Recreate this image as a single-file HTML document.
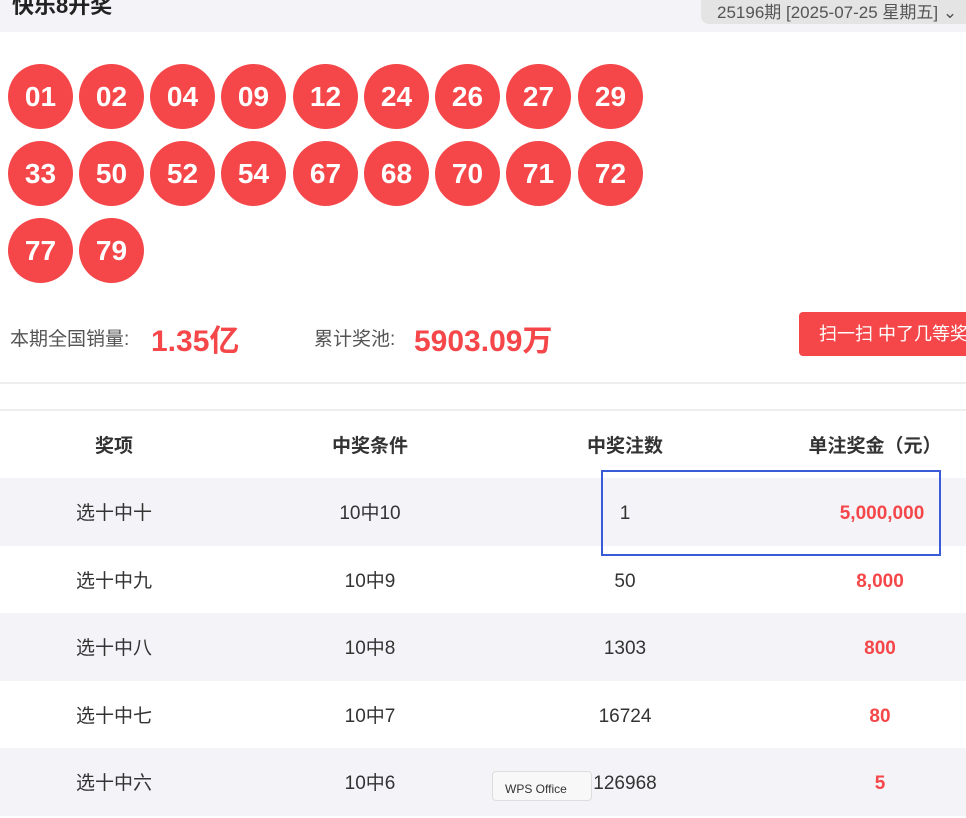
<!DOCTYPE html>
<html><head><meta charset="utf-8"><style>
*{margin:0;padding:0;box-sizing:border-box}
body{width:966px;height:788px;overflow:hidden;background:#fff;font-family:"Liberation Sans","Noto Sans CJK SC",sans-serif;position:relative;color:#333}
.hdr{position:absolute;left:0;top:0;width:966px;height:32px;background:#f4f4f8}
.title{position:absolute;left:12px;top:-12px;font-size:22px;font-weight:bold;color:#222}
.dd{position:absolute;left:701px;top:-8px;width:270px;height:32px;background:#e4e4e4;border-radius:8px;font-size:17px;color:#555;padding:6px 0 0 16px;white-space:nowrap}
.ball{position:absolute;width:65px;height:65px;border-radius:50%;background:#f5474a;color:#fff;font-weight:bold;font-size:28px;text-align:center;line-height:65px}
.lbl{position:absolute;top:324px;font-size:19px;color:#555}
.big{position:absolute;top:316px;font-size:30px;font-weight:bold;color:#f5474a}
.btn{position:absolute;left:799px;top:312px;width:180px;height:44px;background:#f5474a;border-radius:4px;color:#fff;font-size:18px;line-height:44px;padding-left:20px;white-space:nowrap}
.line{position:absolute;left:0;width:966px;height:2px;background:#eee}
.row{position:absolute;left:0;width:966px;height:68px;font-size:19px}
.row div{position:absolute;top:2px;line-height:68px;text-align:center}
.g{background:#f4f4f8}
.c1{left:14px;width:200px}.c2{left:270px;width:200px}.c3{left:525px;width:200px}.c4{left:780px;width:200px;color:#f5474a;font-weight:bold}
.h{font-weight:bold}
</style></head><body>
<div class="hdr"><div class="title">快乐8开奖</div><div class="dd">25196期 [2025-07-25 星期五] ⌄</div></div>
<div class="ball" style="left:8px;top:64px">01</div><div class="ball" style="left:79px;top:64px">02</div><div class="ball" style="left:150px;top:64px">04</div><div class="ball" style="left:221px;top:64px">09</div><div class="ball" style="left:293px;top:64px">12</div><div class="ball" style="left:364px;top:64px">24</div><div class="ball" style="left:435px;top:64px">26</div><div class="ball" style="left:506px;top:64px">27</div><div class="ball" style="left:578px;top:64px">29</div>
<div class="ball" style="left:8px;top:141px">33</div><div class="ball" style="left:79px;top:141px">50</div><div class="ball" style="left:150px;top:141px">52</div><div class="ball" style="left:221px;top:141px">54</div><div class="ball" style="left:293px;top:141px">67</div><div class="ball" style="left:364px;top:141px">68</div><div class="ball" style="left:435px;top:141px">70</div><div class="ball" style="left:506px;top:141px">71</div><div class="ball" style="left:578px;top:141px">72</div>
<div class="ball" style="left:8px;top:218px">77</div><div class="ball" style="left:79px;top:218px">79</div>
<div class="lbl" style="left:10px">本期全国销量:</div><div class="big" style="left:151px">1.35亿</div>
<div class="lbl" style="left:314px">累计奖池:</div><div class="big" style="left:414px">5903.09万</div>
<div class="btn">扫一扫 中了几等奖</div>
<div class="line" style="top:382px"></div><div class="line" style="top:409px"></div>
<div class="row h" style="top:411px"><div class="c1">奖项</div><div class="c2">中奖条件</div><div class="c3">中奖注数</div><div class="c4" style="color:#333;left:765px;width:220px">单注奖金（元）</div></div>
<div class="row g" style="top:478px"><div class="c1">选十中十</div><div class="c2">10中10</div><div class="c3">1</div><div class="c4" style="left:807px;width:150px">5,000,000</div></div>
<div class="row" style="top:546px"><div class="c1">选十中九</div><div class="c2">10中9</div><div class="c3">50</div><div class="c4">8,000</div></div>
<div class="row g" style="top:613px"><div class="c1">选十中八</div><div class="c2">10中8</div><div class="c3">1303</div><div class="c4">800</div></div>
<div class="row" style="top:681px"><div class="c1">选十中七</div><div class="c2">10中7</div><div class="c3">16724</div><div class="c4">80</div></div>
<div class="row g" style="top:748px"><div class="c1">选十中六</div><div class="c2">10中6</div><div class="c3">126968</div><div class="c4">5</div></div>
<div style="position:absolute;left:601px;top:470px;width:340px;height:86px;border:2px solid #3a5bd8"></div>
<div style="position:absolute;left:492px;top:771px;width:100px;height:30px;background:#f8f8f8;border:1px solid #ddd;border-radius:4px;font-size:12px;padding:10px 0 0 12px">WPS Office</div>
</body></html>
